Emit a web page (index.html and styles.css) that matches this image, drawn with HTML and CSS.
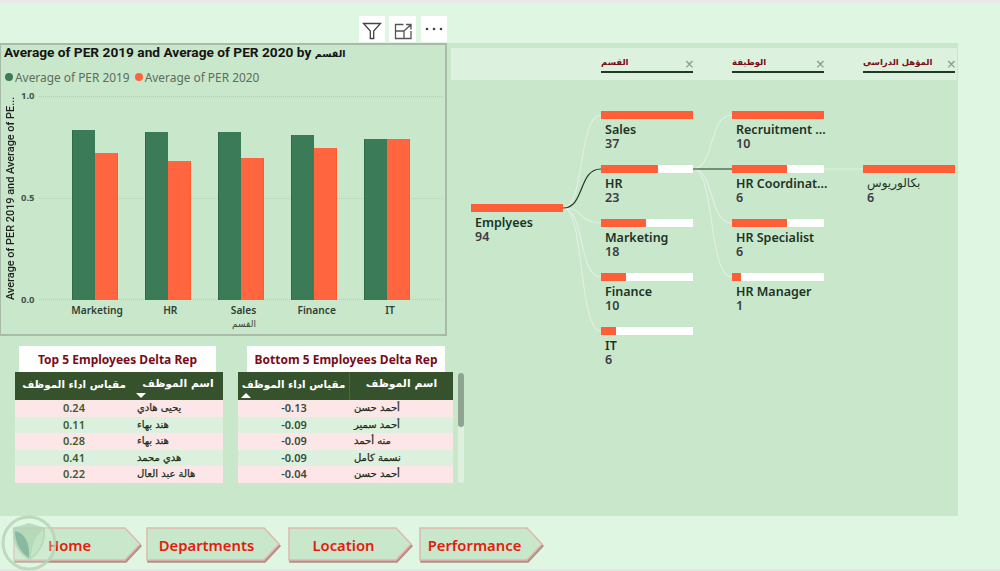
FILE: index.html
```html
<!DOCTYPE html>
<html lang="en">
<head>
<meta charset="utf-8">
<title>Performance</title>
<link rel="stylesheet" href="styles.css">
</head>
<body>
<div class="page">
  <div class="topstrip"></div>
  <div class="toolbar">
    <div class="tool"><svg width="26" height="26" viewBox="0 0 26 26"><path d="M4.500 7.500h17l-6.800 7.500v7.500h-3.400v-7.500z" fill="none" stroke="#444" stroke-width="1.300"/></svg></div>
    <div class="tool tool-wide"><svg width="27" height="26" viewBox="0 0 27 26"><path d="M6.500 15V8.500h8M22 15v7.500H6.500V15h8.500v7.500M15 15l7-6.500M17 8.500h5v5" fill="none" stroke="#555" stroke-width="1.300"/></svg></div>
    <div class="tool"><svg width="26" height="26" viewBox="0 0 26 26"><g fill="#444"><circle cx="6" cy="13" r="1.300"/><circle cx="13" cy="13" r="1.300"/><circle cx="20" cy="13" r="1.300"/></g></svg></div>
  </div>

  <main class="panel">
    <section class="left">
      <div class="chart">
        <h1 class="chart-title">Average of PER 2019 and Average of PER 2020 by <span class="ar">القسم</span></h1>
        <div class="legend">
          <span class="dot dot-green"></span><span class="legend-text">Average of PER 2019</span>
          <span class="dot dot-orange"></span><span class="legend-text">Average of PER 2020</span>
        </div>
        <div class="plot-row">
          <div class="y-title"><span>Average of PER 2019 and Average of PE...</span></div>
          <div class="ticks"><span>1.0</span><span>0.5</span><span>0.0</span></div>
          <div class="plot">
            <i class="grid grid-top"></i><i class="grid grid-mid"></i><i class="grid grid-bot"></i>
            <div class="group"><b class="bar green" style="height:170px"></b><b class="bar orange" style="height:147px"></b></div>
            <div class="group"><b class="bar green" style="height:168px"></b><b class="bar orange" style="height:139px"></b></div>
            <div class="group"><b class="bar green" style="height:168px"></b><b class="bar orange" style="height:142px"></b></div>
            <div class="group"><b class="bar green" style="height:165px"></b><b class="bar orange" style="height:152px"></b></div>
            <div class="group"><b class="bar green" style="height:161px"></b><b class="bar orange" style="height:161px"></b></div>
          </div>
        </div>
        <div class="cats"><span>Marketing</span><span>HR</span><span>Sales</span><span>Finance</span><span>IT</span></div>
        <div class="x-title">القسم</div>
      </div>

      <div class="tables">
        <div class="tbl tbl-a">
          <div class="tbl-title title-a">Top 5 Employees Delta Rep</div>
          <div class="thead">
            <span class="th th-val">مقياس اداء الموظف</span>
            <span class="th th-name">اسم الموظف<i class="arrow-down"></i></span>
          </div>
          <div class="row pink"><span class="val">0.24</span><span class="name">يحيى هادي</span></div>
          <div class="row mint"><span class="val">0.11</span><span class="name">هند بهاء</span></div>
          <div class="row pink"><span class="val">0.28</span><span class="name">هند بهاء</span></div>
          <div class="row mint"><span class="val">0.41</span><span class="name">هدي محمد</span></div>
          <div class="row pink"><span class="val">0.22</span><span class="name">هالة عبد العال</span></div>
        </div>
        <div class="tbl tbl-b">
          <div class="tbl-title title-b">Bottom 5 Employees Delta Rep</div>
          <div class="thead">
            <span class="th th-val">مقياس اداء الموظف<i class="arrow-up"></i></span>
            <span class="th th-name">اسم الموظف</span>
          </div>
          <div class="row pink"><span class="val">-0.13</span><span class="name">أحمد حسن</span></div>
          <div class="row mint"><span class="val">-0.09</span><span class="name">أحمد سمير</span></div>
          <div class="row pink"><span class="val">-0.09</span><span class="name">منه أحمد</span></div>
          <div class="row mint"><span class="val">-0.09</span><span class="name">نسمة كامل</span></div>
          <div class="row pink"><span class="val">-0.04</span><span class="name">أحمد حسن</span></div>
        </div>
        <div class="scroll"><div class="thumb"></div></div>
      </div>
    </section>

    <section class="right">
      <div class="tree-head">
        <div class="level"><span class="level-name">القسم</span><span class="level-x">×</span></div>
        <div class="level"><span class="level-name">الوظيفة</span><span class="level-x">×</span></div>
        <div class="level"><span class="level-name">المؤهل الدراسي</span><span class="level-x">×</span></div>
      </div>
      <div class="tree">
        <svg class="links" width="507" height="300" viewBox="451 80 507 300" fill="none">
          <g stroke="#e4efe4" stroke-width="1.100">
            <path d="M563 208C585 208 578 115 601 115"/>
            <path d="M563 208C585 208 578 223 601 223"/>
            <path d="M563 208C585 208 578 277 601 277"/>
            <path d="M563 208C585 208 578 331 601 331"/>
            <path d="M693 169C715 169 708 115 732 115"/>
            <path d="M693 169C715 169 708 223 732 223"/>
            <path d="M693 169C715 169 708 277 732 277"/>
            <path d="M824 169H863"/>
          </g>
          <g stroke="#1d3a24" stroke-width="1.200">
            <path d="M563 208C585 208 578 169 601 169"/>
            <path d="M693 169H732"/>
          </g>
        </svg>
        <div class="col col-root">
          <div class="node"><div class="track"><div class="fill" style="width:100%"></div></div><div class="n-name">Emplyees</div><div class="n-val">94</div></div>
        </div>
        <div class="col col-1">
          <div class="node"><div class="track"><div class="fill" style="width:100%"></div></div><div class="n-name">Sales</div><div class="n-val">37</div></div>
          <div class="node"><div class="track"><div class="fill" style="width:62%"></div></div><div class="n-name">HR</div><div class="n-val">23</div></div>
          <div class="node"><div class="track"><div class="fill" style="width:49%"></div></div><div class="n-name">Marketing</div><div class="n-val">18</div></div>
          <div class="node"><div class="track"><div class="fill" style="width:27%"></div></div><div class="n-name">Finance</div><div class="n-val">10</div></div>
          <div class="node"><div class="track"><div class="fill" style="width:16%"></div></div><div class="n-name">IT</div><div class="n-val">6</div></div>
        </div>
        <div class="col col-2">
          <div class="node"><div class="track"><div class="fill" style="width:100%"></div></div><div class="n-name">Recruitment ...</div><div class="n-val">10</div></div>
          <div class="node"><div class="track"><div class="fill" style="width:60%"></div></div><div class="n-name">HR Coordinat...</div><div class="n-val">6</div></div>
          <div class="node"><div class="track"><div class="fill" style="width:60%"></div></div><div class="n-name">HR Specialist</div><div class="n-val">6</div></div>
          <div class="node"><div class="track"><div class="fill" style="width:10%"></div></div><div class="n-name">HR Manager</div><div class="n-val">1</div></div>
        </div>
        <div class="col col-3">
          <div class="node"><div class="track"><div class="fill" style="width:100%"></div></div><div class="n-name n-ar">بكالوريوس</div><div class="n-val">6</div></div>
        </div>
      </div>
    </section>
  </main>

  <nav class="nav">
    <a class="chev chev-home"><svg viewBox="0 0 128 34" preserveAspectRatio="none"><path d="M1 1H112L127 17 112 33H1z"/></svg><span class="chev-text">Home</span></a>
    <a class="chev chev-dept"><svg viewBox="0 0 134 34" preserveAspectRatio="none"><path d="M1 1H118L133 17 118 33H1z"/></svg><span class="chev-text">Departments</span></a>
    <a class="chev chev-loc"><svg viewBox="0 0 124 34" preserveAspectRatio="none"><path d="M1 1H108L123 17 108 33H1z"/></svg><span class="chev-text">Location</span></a>
    <a class="chev chev-perf"><svg viewBox="0 0 124 34" preserveAspectRatio="none"><path d="M1 1H108L123 17 108 33H1z"/></svg><span class="chev-text">Performance</span></a>
  </nav>
  <svg class="logo" width="58" height="60" viewBox="0 0 58 60">
    <circle cx="29" cy="29" r="26" fill="#dff6e2" fill-opacity=".3" stroke="#b5d6b5" stroke-opacity=".85" stroke-width="3"/>
    <path d="M13 14 29 9l16 5c1 14-4 25-16 32C17 39 12 28 13 14z" fill="#a9d3af" fill-opacity=".7"/>
    <path d="M15 17c10 2 15 12 14 27C20 38 15 29 15 17z" fill="#7fb09c" fill-opacity=".8"/>
    <path d="M43 16c1 12-4 22-12 27 0-10 4-21 12-27z" fill="#c6e6c8" fill-opacity=".85"/>
  </svg>
  <div class="bottomstrip"></div>
</div>
</body>
</html>
```
FILE: styles.css
```css
* { box-sizing: border-box; }
html, body { margin: 0; padding: 0; }
body { background: #dff6e2; font-family: "Noto Sans", "DejaVu Sans", sans-serif; }
.page { position: relative; width: 1000px; height: 571px; overflow: hidden; background: #dff6e2; display: flex; flex-direction: column; }
.topstrip { height: 4px; flex: none; background: linear-gradient(#e6e6e6, #eceeec); }
.toolbar { height: 39px; flex: none; display: flex; padding: 12px 0 0 359px; gap: 4px; }
.tool { width: 26px; height: 26px; background: #fff; }
.tool-wide { width: 27px; margin-right: 1px; }
.tool svg { display: block; }

.panel { width: 958px; height: 473px; flex: none; background: #c9e7ca; display: flex; }
.left { width: 447px; flex: none; }
.right { flex: 1; padding: 5px 0 0 4px; position: relative; }

.chart { height: 293px; border: 2px solid #a9baa9; border-left-width: 1px; display: flex; flex-direction: column; }
.chart-title { margin: 0; padding: 0 0 0 3px; font: 700 13.700px/14px Roboto, "DejaVu Sans", sans-serif; color: #141414; height: 14px; white-space: nowrap; }
.ar { font-size: 9.500px; }
.legend { display: flex; align-items: center; height: 14px; margin-top: 11px; padding-left: 4px; font: 400 11.900px/14px "Noto Sans", sans-serif; color: #5d6d60; }
.dot { width: 8px; height: 8px; border-radius: 50%; margin-right: 2px; flex: none; }
.dot-green { background: #3b7b57; }
.dot-orange { background: #ff633c; margin-left: 5px; margin-right: 2px; }
.plot-row { display: flex; margin-top: 12px; height: 204px; }
.y-title { width: 20px; flex: none; writing-mode: vertical-rl; transform: rotate(180deg); font: 500 10.900px/20px Roboto, sans-serif; color: #1f1f1f; white-space: nowrap; text-align: left; overflow: hidden; }
.ticks { width: 18px; height: 216px; margin-top: -6px; display: flex; flex-direction: column; justify-content: space-between; font: 700 9.500px/12px "Noto Sans", sans-serif; color: #46534a; flex: none; }
.plot { position: relative; flex: 1; display: flex; align-items: flex-end; padding: 0 18.500px 0 19.500px; margin-right: 3px; }
.grid { position: absolute; left: 0; right: 0; border-top: 1px dotted #b3cfb4; }
.grid-top { top: 0; }
.grid-mid { top: 102px; }
.grid-bot { top: 203px; }
.group { position: relative; flex: 1; display: flex; justify-content: center; align-items: flex-end; height: 100%; }
.bar { width: 23px; display: block; }
.green { background: #3b7b57; border-left: 1px solid #2e6a48; }
.orange { background: #ff663f; border-right: 1px solid #ff5a2e; }
.cats { display: flex; padding-left: 59.500px; margin-top: 3px; width: 425.500px; font: 600 10.200px/14px "Noto Sans", sans-serif; color: #2f3f33; }
.cats span { flex: 1; text-align: center; }
.x-title { width: 486px; text-align: center; font: 400 9px/14px "DejaVu Sans", sans-serif; color: #37473b; }

.tables { display: flex; padding: 10px 0 0 15px; height: 180px; }
.tbl { flex: none; }
.tbl-a { width: 208px; margin-right: 15px; }
.tbl-b { width: 215px; }
.tbl-title { height: 26px; background: #fff; font: 700 12px/27px "Noto Sans", sans-serif; color: #7a0c18; text-align: center; white-space: nowrap; }
.title-a { margin: 0 7px 0 4px; }
.title-b { margin: 0 8px 0 9px; }
.thead { height: 28px; background: #35522d; display: flex; color: #fff; }
.th { position: relative; font: 700 10.300px/24px "DejaVu Sans", sans-serif; text-align: center; white-space: nowrap; }
.th-name { font-size: 10.800px; }
.tbl-a .th-val { width: 118px; }
.tbl-a .th-name { flex: 1; }
.tbl-b .th-val { width: 112px; border-right: 1px solid #4b6743; }
.tbl-b .th-name { flex: 1; }
.arrow-down { position: absolute; left: 3px; bottom: 2px; width: 0; height: 0; border: 5px solid transparent; border-top: 5px solid #fff; border-bottom: 0; }
.arrow-up { position: absolute; left: 3px; bottom: 2px; width: 0; height: 0; border: 5px solid transparent; border-bottom: 5px solid #fff; border-top: 0; }
.row { height: 16.600px; display: flex; font: 400 10px/16.600px "DejaVu Sans", sans-serif; color: #1e2c18; }
.pink { background: #fde6e8; }
.mint { background: #dbf1dd; }
.val { text-align: center; font: 600 11px/16.600px "Noto Sans", sans-serif; color: #3d5a2d; }
.name { white-space: nowrap; -webkit-text-stroke: .25px #1e2c18; }
.tbl-a .val { width: 118px; }
.tbl-a .name { padding-left: 4px; }
.tbl-b .val { width: 112px; color: #3a4a35; }
.tbl-b .name { padding-left: 4px; }
.scroll { width: 6px; height: 110px; margin: 27px 0 0 5px; background: #ddf1de; border-radius: 3px; flex: none; }
.thumb { height: 54px; background: #8fa391; border-radius: 3px; }

.tree-head { width: 506px; height: 32px; background: #dcf2de; display: flex; padding: 0 0 0 150px; gap: 39px; }
.level { position: relative; width: 92px; height: 25px; border-bottom: 2px solid #1d3a24; display: flex; align-items: flex-start; }
.level-name { font: 700 8.500px/28px "DejaVu Sans", sans-serif; color: #7a0c18; white-space: nowrap; }
.level-x { position: absolute; right: -1px; bottom: 0; font: 400 16px/14px "Noto Sans", sans-serif; color: #8d9a8f; }
.tree { position: relative; display: flex; height: 300px; }
.links { position: absolute; left: 0; top: 0; }
.col { position: relative; width: 92px; flex: none; display: flex; flex-direction: column; }
.col-root { margin-left: 20px; padding-top: 124px; }
.col-1 { margin-left: 38px; padding-top: 31px; }
.col-2 { margin-left: 39px; padding-top: 31px; }
.col-3 { margin-left: 39px; padding-top: 85px; }
.node { height: 54px; flex: none; }
.track { height: 8px; background: #fff; }
.fill { height: 8px; background: #ff5f38; }
.n-name { margin: 3px 0 0 4px; font: 600 12.500px/15px "Noto Sans", sans-serif; color: #1d3326; white-space: nowrap; }
.n-ar { font: 400 12px/15px "DejaVu Sans", sans-serif; }
.n-val { margin-left: 4px; font: 600 12.500px/14px "Noto Sans", sans-serif; color: #3b3b46; }

.nav { height: 53px; flex: none; padding: 11px 0 0 13px; display: flex; }
.chev { display: grid; height: 34px; }
.chev svg { grid-area: 1 / 1; width: 100%; height: 34px; filter: drop-shadow(1px 2px 0 #b98d86); }
.chev path { fill: #c9e7ca; stroke: #deb9b0; stroke-width: 1.500; }
.chev-text { position: relative; grid-area: 1 / 1; justify-self: center; padding-right: 13px; font: 600 14.800px/36px "Noto Sans", sans-serif; color: #e41c0e; white-space: nowrap; }
.chev-home { width: 128px; margin-right: 5px; }
.chev-dept { width: 134px; margin-right: 8px; }
.chev-loc { width: 124px; margin-right: 7px; }
.chev-perf { width: 124px; }
.chev-home .chev-text { justify-self: start; padding: 0 0 0 35px; }
.logo { position: absolute; left: 0; top: 514px; }
.bottomstrip { height: 2px; flex: none; background: #e4e6e4; }
```
